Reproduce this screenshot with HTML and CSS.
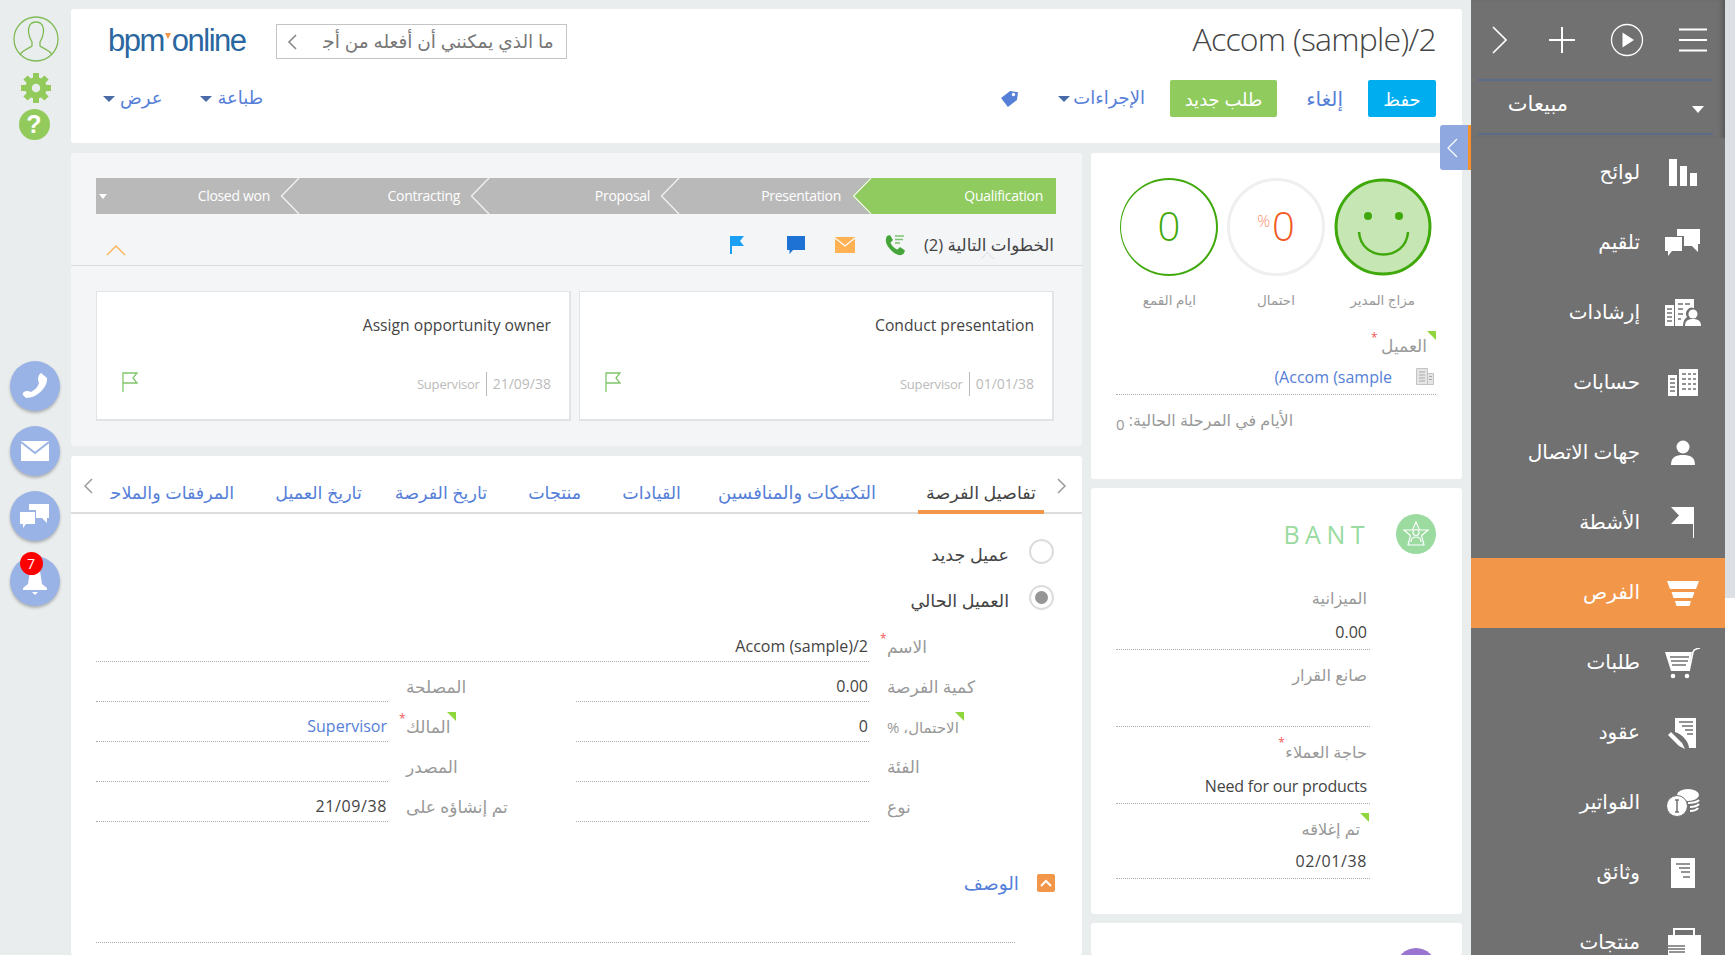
FILE: index.html
```html
<!DOCTYPE html>
<html lang="ar" dir="rtl">
<head>
<meta charset="utf-8">
<title>Accom (sample)/2</title>
<link rel="stylesheet" href="styles.css">
</head>
<body>
<div class="app">

<aside class="sidebar">
  <div class="side-top">
    <div class="side-tools">
      <svg class="ico-burger" width="28" height="24" viewBox="0 0 28 24"><path d="M0 1.500H28M0 12H28M0 22.500H28" stroke="#fff" stroke-width="2" fill="none"/></svg>
      <svg class="ico-play" width="34" height="34" viewBox="0 0 34 34"><circle cx="17" cy="17" r="15.500" fill="none" stroke="#fff" stroke-width="1.300"/><path d="M12.500 9.500 24 17 12.500 24.500Z" fill="#fff"/></svg>
      <svg class="ico-plus" width="26" height="26" viewBox="0 0 26 26"><path d="M13 0V26M0 13H26" stroke="#fff" stroke-width="2" fill="none"/></svg>
      <svg class="ico-next" width="15" height="28" viewBox="0 0 15 28"><path d="M1 1 14 14 1 27" stroke="#fff" stroke-width="1.600" fill="none"/></svg>
    </div>
    <div class="side-section"><span class="side-caret"></span><span>مبيعات</span></div>
  </div>
  <nav class="side-menu">
    <a class="side-item"><span class="side-ico"><svg width="30" height="28" viewBox="0 0 30 28"><path d="M1 0H9V27H1ZM12 7H19V27H12ZM22 14H29V27H22Z" fill="#fff"/></svg></span><span>لوائح</span></a>
    <a class="side-item"><span class="side-ico"><svg width="36" height="28" viewBox="0 0 36 28"><path d="M12 0H35V15H33V23L27 17H19V7H12Z" fill="#fff"/><path d="M0 8H17V22H7L3 27V22H0Z" fill="#fff"/></svg></span><span>تلقيم</span></a>
    <a class="side-item"><span class="side-ico"><svg width="36" height="28" viewBox="0 0 36 28"><path d="M0 6H9V27H0Z" fill="#fff"/><path d="M10 0H29V9A6 6 0 0 0 22 18 11 11 0 0 0 18 27H10Z" fill="#fff"/><circle cx="28" cy="15" r="4.500" fill="#fff"/><path d="M20 27C20 21 24 20 28 20S36 21 36 27Z" fill="#fff"/><path d="M2 10H7M2 14H7M2 18H7M2 22H7M13 5H18M20 5H25M13 10H18M13 15H18M13 20H16" stroke="#717171" stroke-width="1.500"/></svg></span><span>إرشادات</span></a>
    <a class="side-item"><span class="side-ico"><svg width="30" height="28" viewBox="0 0 30 28"><path d="M0 6H9V27H0ZM11 0H30V27H11Z" fill="#fff"/><path d="M2 10H7M2 14H7M2 18H7M2 22H7M14 5H18M20 5H23M25 5H28M14 10H18M20 10H23M25 10H28M14 15H18M20 15H23M25 15H28M14 20H18M20 20H23M25 20H28" stroke="#717171" stroke-width="1.500"/></svg></span><span>حسابات</span></a>
    <a class="side-item"><span class="side-ico"><svg width="24" height="26" viewBox="0 0 24 26"><circle cx="12" cy="7" r="6.500" fill="#fff"/><path d="M0 25C0 17 5 15 12 15S24 17 24 25Z" fill="#fff"/></svg></span><span>جهات الاتصال</span></a>
    <a class="side-item"><span class="side-ico"><svg width="24" height="32" viewBox="0 0 24 32"><path d="M0 0H23V31H22V17H0L8 8.500Z" fill="#fff"/></svg></span><span>الأشطة</span></a>
    <a class="side-item is-active"><span class="side-ico"><svg width="32" height="25" viewBox="0 0 32 25"><path d="M0 0H32L29 8H3ZM4.500 11H27.500L25.500 17H6.500ZM8 20H24L22.500 25H9.500Z" fill="#fff"/></svg></span><span>الفرص</span></a>
    <a class="side-item"><span class="side-ico"><svg width="36" height="31" viewBox="0 0 36 31"><path d="M0 4H27L24 23H6Z" fill="#fff"/><path d="M5 9H24M6 13H23M7 17H21" stroke="#717171" stroke-width="1.500"/><path d="M24 23 28 4Q29 1 35 0" stroke="#fff" stroke-width="1.600" fill="none"/><circle cx="8" cy="28" r="2.300" fill="#fff"/><circle cx="22" cy="28" r="2.300" fill="#fff"/></svg></span><span>طلبات</span></a>
    <a class="side-item"><span class="side-ico"><svg width="30" height="31" viewBox="0 0 30 31"><path d="M7 0H28V30H21C21 24 14 16 7 14Z" fill="#fff"/><path d="M11 4H25M14 8H25M17 12H25M19 16H25" stroke="#717171" stroke-width="1.400"/><path d="M0 17 3 14 14 25 17 31 11 28Z" fill="#fff"/></svg></span><span>عقود</span></a>
    <a class="side-item"><span class="side-ico"><svg width="33" height="28" viewBox="0 0 33 28"><ellipse cx="21" cy="6" rx="11" ry="6" fill="#fff"/><path d="M21 14Q29 14 32 11M23 18Q29 18 32 15M23 22Q29 22 31 19" stroke="#fff" stroke-width="2.200" fill="none"/><circle cx="10" cy="17" r="10.500" fill="#fff" stroke="#717171"/><path d="M10 11V23M8 11H12M8 23H12" stroke="#717171" stroke-width="1.500"/></svg></span><span>الفواتير</span></a>
    <a class="side-item"><span class="side-ico"><svg width="24" height="30" viewBox="0 0 24 30"><path d="M0 0H24V30H0Z" fill="#fff"/><path d="M5 6H19M8 10H19M10 14H19M12 19H19" stroke="#717171" stroke-width="1.400"/></svg></span><span>وثائق</span></a>
    <a class="side-item"><span class="side-ico"><svg width="36" height="30" viewBox="0 0 36 30"><path d="M9 7V1H29V7" stroke="#fff" stroke-width="2" fill="none"/><path d="M3 7H36V30H3Z" fill="#fff"/><path d="M0 18H20M2 21H20M4 24H20" stroke="#717171" stroke-width="1.400"/></svg></span><span>منتجات</span></a>
  </nav>
</aside>

<main class="workspace">
  <header class="card page-head">
    <div class="head-row">
      <h1 class="page-title" dir="ltr">Accom (sample)/2</h1>
      <div class="head-brand">
        <div class="search"><span class="search-text">ما الذي يمكنني أن أفعله من أج&zwj;</span><svg class="search-chev" width="10" height="16" viewBox="0 0 10 16"><path d="M9 1 2 8 9 15" stroke="#888" stroke-width="1.600" fill="none"/></svg></div>
        <div class="logo" dir="ltr">bpm<span class="logo-dot"></span>online</div>
      </div>
    </div>
    <div class="head-row head-actions">
      <div class="actions">
        <a class="btn btn-save">حفظ</a>
        <a class="link-cancel">إلغاء</a>
        <a class="btn btn-new">طلب جديد</a>
        <a class="menu-link menu-actions">الإجراءات<i class="caret"></i></a>
        <svg class="ico-tag" width="18" height="18" viewBox="0 0 18 18"><path d="M9 1H17V9L9 17 1 9Z" fill="#5680d8" transform="rotate(8 9 9)"/><circle cx="13.500" cy="4.500" r="1.700" fill="#fff"/></svg>
      </div>
      <div class="view-menus">
        <a class="menu-link">طباعة<i class="caret"></i></a>
        <a class="menu-link">عرض<i class="caret"></i></a>
      </div>
    </div>
  </header>

  <div class="columns">
    <div class="col-main">
      <section class="card stage-card">
        <div class="stages" dir="ltr">
          <div class="stage stage-last"><i class="stage-drop"></i><span>Closed won</span></div>
          <div class="stage"><svg class="stage-chev" width="20" height="36" viewBox="0 0 20 36"><path d="M19 0 1.500 18 19 36" stroke="#f0f0f0" stroke-width="1.400" fill="none"/></svg><span>Contracting</span></div>
          <div class="stage"><svg class="stage-chev" width="20" height="36" viewBox="0 0 20 36"><path d="M19 0 1.500 18 19 36" stroke="#f0f0f0" stroke-width="1.400" fill="none"/></svg><span>Proposal</span></div>
          <div class="stage stage-present"><svg class="stage-chev" width="20" height="36" viewBox="0 0 20 36"><path d="M19 0 1.500 18 19 36" stroke="#f0f0f0" stroke-width="1.400" fill="none"/></svg><span>Presentation</span></div>
          <div class="stage stage-current"><svg class="stage-chev" width="20" height="36" viewBox="0 0 20 36"><path d="M19 0 1.500 18 19 36" stroke="#f0f0f0" stroke-width="1.400" fill="none"/></svg><span>Qualification</span></div>
        </div>
        <div class="steps-bar">
          <span class="steps-title">الخطوات التالية (2)</span>
          <svg class="ico-phone" width="21" height="21" viewBox="0 0 21 21"><path d="M3 1 6 0 9 5 6.500 7.500C7 10 11 14 13.500 14.500L16 12 21 15.500 20 18C18 21 14 21 9 17 3 12 0 6 3 1Z" fill="#46a53a"/><path d="M11 1H20M11 4.500H19M11 8H16" stroke="#7cc36f" stroke-width="1.500"/></svg>
          <svg class="ico-env" width="20" height="16" viewBox="0 0 20 16"><path d="M0 0H20V16H0Z" fill="#ffb153"/><path d="M0 1 10 9 20 1" stroke="#fff" stroke-width="1.300" fill="none"/></svg>
          <svg class="ico-msg" width="18" height="18" viewBox="0 0 18 18"><path d="M0 0H18V14H6L2.500 18V14H0Z" fill="#1d72d3"/></svg>
          <svg class="ico-flag" width="14" height="18" viewBox="0 0 14 18"><path d="M0 0H14L10 5 14 10H2V18H0Z" fill="#1a9ff5"/></svg>
          <svg class="ico-collapse" width="20" height="11" viewBox="0 0 20 11"><path d="M1 10 10 1 19 10" stroke="#ffb153" stroke-width="1.400" fill="none"/></svg>
        </div>
        <div class="tasks">
          <article class="task">
            <div class="task-title">Conduct presentation</div>
            <div class="task-foot">
              <span class="task-date" dir="ltr">01/01/38</span><span class="task-owner">Supervisor</span>
              <svg class="task-flag" width="16" height="20" viewBox="0 0 16 20"><path d="M1 20V1H15L11 6 15 11H1" stroke="#80c66c" stroke-width="1.300" fill="none"/></svg>
            </div>
          </article>
          <article class="task">
            <div class="task-title">Assign opportunity owner</div>
            <div class="task-foot">
              <span class="task-date" dir="ltr">21/09/38</span><span class="task-owner">Supervisor</span>
              <svg class="task-flag" width="16" height="20" viewBox="0 0 16 20"><path d="M1 20V1H15L11 6 15 11H1" stroke="#80c66c" stroke-width="1.300" fill="none"/></svg>
            </div>
          </article>
        </div>
      </section>

      <section class="card detail-card">
        <div class="tabs">
          <svg class="tab-arrow" width="9" height="16" viewBox="0 0 9 16"><path d="M1 1 8 8 1 15" stroke="#999" stroke-width="1.500" fill="none"/></svg>
          <a class="tab is-active">تفاصيل الفرصة</a>
          <a class="tab tab-tactics">التكتيكات والمنافسين</a>
          <a class="tab">القيادات</a>
          <a class="tab">منتجات</a>
          <a class="tab tab-history">تاريخ الفرصة</a>
          <a class="tab">تاريخ العميل</a>
          <a class="tab tab-end">المرفقات والملاح&zwj;</a>
          <svg class="tab-arrow tab-arrow-end" width="9" height="16" viewBox="0 0 9 16"><path d="M8 1 1 8 8 15" stroke="#999" stroke-width="1.500" fill="none"/></svg>
        </div>
        <div class="radios">
          <label class="radio"><i class="radio-dot"></i><span>عميل جديد</span></label>
          <label class="radio"><i class="radio-dot is-on"></i><span>العميل الحالي</span></label>
        </div>
        <div class="form-grid">
          <div class="f-label"><span class="req-start">الاسم</span></div>
          <div class="f-value f-wide"><bdi dir="ltr">Accom (sample)/2</bdi></div>

          <div class="f-label"><span>كمية الفرصة</span></div>
          <div class="f-value">0.00</div>
          <div class="f-label"><span>المصلحة</span></div>
          <div class="f-value"></div>

          <div class="f-label f-narrow"><span class="mark">الاحتمال، %</span></div>
          <div class="f-value">0</div>
          <div class="f-label"><span class="mark req-owner">المالك</span></div>
          <div class="f-value f-link">Supervisor</div>

          <div class="f-label"><span>الفئة</span></div>
          <div class="f-value"></div>
          <div class="f-label"><span>المصدر</span></div>
          <div class="f-value"></div>

          <div class="f-label"><span>نوع</span></div>
          <div class="f-value"></div>
          <div class="f-label"><span>تم إنشاؤه على</span></div>
          <div class="f-value f-date"><bdi dir="ltr">21/09/38</bdi></div>
        </div>
        <div class="desc-head">
          <i class="desc-toggle"><svg width="12" height="8" viewBox="0 0 12 8"><path d="M1 7 6 2 11 7" stroke="#fff" stroke-width="2" fill="none"/></svg></i>
          <span>الوصف</span>
        </div>
        <div class="desc-line"></div>
      </section>
    </div>

    <div class="col-side">
      <section class="card kpi-card">
        <div class="kpis">
          <div class="kpi">
            <svg width="98" height="98" viewBox="0 0 98 98"><circle cx="49" cy="49" r="47" fill="#c6e6b4" stroke="#3fa80a" stroke-width="3"/><circle cx="34" cy="38" r="4" fill="#3fa80a"/><circle cx="65" cy="38" r="4" fill="#3fa80a"/><path d="M25 54C27 84 72 84 74 54" stroke="#3fa80a" stroke-width="2.500" fill="none"/></svg>
            <span class="kpi-label">مزاج المدير</span>
          </div>
          <div class="kpi">
            <div class="dial dial-prob"><span class="dial-num" dir="ltr"><small>%</small>0</span></div>
            <span class="kpi-label">احتمال</span>
          </div>
          <div class="kpi">
            <div class="dial dial-days"><span class="dial-num">0</span></div>
            <span class="kpi-label">ايام القمع</span>
          </div>
        </div>
        <div class="client-label"><span class="mark req-client">العميل</span></div>
        <div class="client-value">
          <svg width="18" height="17" viewBox="0 0 18 17"><path d="M0.500 0.500H11.500V16.500H0.500ZM11.500 5.500H17.500V16.500H11.500Z" fill="#e4e4e4" stroke="#c4c4c4"/><path d="M3 4H9M3 7H9M3 10H9M3 13H9M13 8.500H16M13 11.500H16" stroke="#aaa"/></svg>
          <a dir="ltr">(Accom (sample</a>
        </div>
        <div class="days-line">الأيام في المرحلة الحالية: <b>0</b></div>
      </section>

      <section class="card bant-card">
        <div class="bant-head">
          <div class="bant-badge"><svg width="28" height="28" viewBox="0 0 28 28"><path d="M14 2 17.500 10H26L19.500 15.500 22 25H6L8.500 15.500 2 10H10.500Z" fill="none" stroke="#fff" stroke-width="1.200"/><circle cx="14" cy="12.500" r="3" fill="none" stroke="#fff" stroke-width="1.200"/><path d="M9 22C9 18 11 17 14 17S19 18 19 22" fill="none" stroke="#fff" stroke-width="1.200"/></svg></div>
          <span class="bant-title" dir="ltr">BANT</span>
        </div>
        <div class="b-field"><div class="b-label">الميزانية</div><div class="b-value">0.00</div></div>
        <div class="b-field"><div class="b-label">صانع القرار</div><div class="b-value"></div></div>
        <div class="b-field"><div class="b-label"><span class="req-need">حاجة العملاء</span></div><div class="b-value b-need"><bdi dir="ltr">Need for our products</bdi></div></div>
        <div class="b-field b-last"><div class="b-label"><span class="mark">تم إغلاقه</span></div><div class="b-value f-date"><bdi dir="ltr">02/01/38</bdi></div></div>
      </section>

      <section class="card next-card">
        <div class="next-badge"></div>
        <span class="next-title">تفاصيل</span>
      </section>
    </div>
  </div>
</main>

<div class="rail">
  <svg class="rail-avatar" width="46" height="46" viewBox="0 0 46 46"><circle cx="23" cy="23" r="22" fill="none" stroke="#7fbb55" stroke-width="1.300"/><path d="M23 6C17 6 15 11 15.500 16 16 20 17 23 19 26V30C15 33 9 34 7 39M23 6C29 6 31 11 30.500 16 30 20 29 23 27 26V30C31 33 37 34 39 39" fill="none" stroke="#7fbb55" stroke-width="1.300"/></svg>
  <svg class="rail-gear" width="32" height="32" viewBox="0 0 32 32"><circle cx="16" cy="16" r="7.500" fill="none" stroke="#92ca5b" stroke-width="6.500"/><path d="M16 1V7M16 25V31M1 16H7M25 16H31M5.500 5.500 9.700 9.700M22.300 22.300 26.500 26.500M5.500 26.500 9.700 22.300M22.300 9.700 26.500 5.500" stroke="#92ca5b" stroke-width="6"/></svg>
  <div class="rail-help" dir="ltr">?</div>
  <div class="rail-circles">
    <div class="rail-btn"><svg width="28" height="28" viewBox="0 0 28 28"><path d="M20 1 26 6C27 15 16 26 5 26L2 23C1 21 3 19 7 19L10 20C14 18 17 15 18 11L17 8C17 5 18 2 20 1Z" fill="#fff"/></svg></div>
    <div class="rail-btn"><svg width="28" height="20" viewBox="0 0 28 20"><path d="M0 0H28V20H0Z" fill="#fff"/><path d="M0 1 14 12 28 1" stroke="#9ab3e6" stroke-width="2" fill="none"/></svg></div>
    <div class="rail-btn"><svg width="30" height="25" viewBox="0 0 30 25"><path d="M9 0H29V14H27V19L22 14H16V6H9Z" fill="#fff"/><path d="M0 8H15V20H6L3 24V20H0Z" fill="#fff"/></svg></div>
    <div class="rail-btn rail-bell"><svg width="24" height="28" viewBox="0 0 24 28"><path d="M7 4H17L19 17 24 21V23H0V21L5 17Z" fill="#fff"/><path d="M9 25H15L12 28Z" fill="#fff"/></svg><span class="badge">7</span></div>
  </div>
</div>

<button class="collapse" type="button" aria-label="collapse"><svg width="11" height="20" viewBox="0 0 11 20"><path d="M10 1 1 10 10 19" stroke="#fff" stroke-width="1.200" fill="none"/></svg></button>
</div>
</body>
</html>
```
FILE: styles.css
```css
* { box-sizing: border-box; }
html, body { margin: 0; height: 955px; overflow: hidden; }
body { font-family: "Open Sans", "DejaVu Sans", sans-serif; font-size: 15px; color: #444; background: #e9edee; }
a { text-decoration: none; cursor: pointer; }
i { display: block; font-style: normal; }
svg { display: block; flex: none; }

.app { display: flex; height: 955px; width: 1735px; padding-right: 10px; overflow: hidden; position: relative;
  background: linear-gradient(#dcdfe4, #dcdfe4) no-repeat right top / 10px 598px, linear-gradient(#fff, #fff) no-repeat right top / 10px 100%; background-color: #e9edee; }

/* right application menu */
.sidebar { width: 254px; flex: none; background: #717171; color: #fff; }
.side-top { height: 138px; padding: 0 12px 3px 7px; box-shadow: inset -5px 0 4px -2px #5a5a5a; }
.side-tools { height: 79px; display: flex; align-items: center; padding-right: 6px; }
.ico-play { margin-right: 35px; }
.ico-plus { margin-right: 35px; }
.ico-next { margin-right: 42px; }
.side-section { height: 56px; display: flex; align-items: center; border-top: 2px solid #5c6b88; border-bottom: 2px solid #5c6b88; font-size: 21px; line-height: 40px; padding-right: 9px; }
.side-section span:last-child { margin-top: -8px; }
.side-caret { width: 0; height: 0; border-left: 6.500px solid transparent; border-right: 6.500px solid transparent; border-top: 7px solid #fff; margin-left: 124px; margin-top: 4px; }
.side-item { height: 70px; display: flex; align-items: center; gap: 23px; padding-right: 22px; color: #fff; font-size: 20px; line-height: 30px; }
.side-item span:last-child { margin-top: -3px; }
.side-item.is-active { background: #f29649; }
.side-ico { width: 40px; height: 40px; display: flex; align-items: center; justify-content: center; flex: none; }

/* main area */
.workspace { width: 1391px; flex: none; margin-right: 9px; padding-top: 9px; display: flex; flex-direction: column; gap: 10px; }
.card { background: #fff; border-radius: 3px; }

.page-head { height: 134px; padding: 15px 26px 0 32px; flex: none; }
.head-row { display: flex; justify-content: space-between; align-items: center; }
.page-title { margin: -6px 0 0 0; font-size: 32px; letter-spacing: -0.750px; font-weight: 300; line-height: 35px; color: #444; }
.head-brand { display: flex; align-items: center; gap: 30px; padding-left: 5px; }
.search { width: 291px; height: 35px; border: 1.500px solid #c4c4c4; display: flex; align-items: center; padding: 0 12px 0 10px; justify-content: space-between; }
.search-text { font-size: 18.500px; color: #777; white-space: nowrap; line-height: 30px; margin-top: -2px; }
.logo { font-family: "Liberation Sans", sans-serif; font-size: 31px; line-height: 35px; letter-spacing: -1.500px; color: #2a669f; margin-top: -2px; }
.logo-dot { display: inline-block; width: 0; height: 0; border-left: 3px solid transparent; border-right: 3px solid transparent; border-top: 6px solid #f29649; vertical-align: 12px; margin: 0 1px; }
.head-actions { margin-top: 21px; height: 37px; }
.actions { display: flex; align-items: center; height: 37px; }
.btn { display: flex; align-items: center; justify-content: center; height: 37px; border-radius: 2px; color: #fff; font-size: 18px; }
.btn-save { width: 68px; background: #00aeef; margin-left: 25px; }
.link-cancel { width: 35px; color: #5680d8; font-size: 20px; margin-left: 31px; white-space: nowrap; }
.btn-new { width: 107px; background: #8fcb5d; margin-left: 25px; }
.menu-link { display: flex; align-items: center; gap: 5px; padding-bottom: 3px; color: #5680d8; font-size: 18px; white-space: nowrap; line-height: 30px; }
.menu-actions { margin-left: 40px; gap: 3px; }
.caret { width: 0; height: 0; border-left: 6px solid transparent; border-right: 6px solid transparent; border-top: 6px solid #4a6aa8; margin-top: 4px; }
.view-menus { display: flex; gap: 38px; }

.columns { display: flex; gap: 9px; flex: 1; min-height: 0; }
.col-main { order: 2; width: 1011px; flex: none; display: flex; flex-direction: column; gap: 10px; }
.col-side { order: 1; width: 371px; flex: none; display: flex; flex-direction: column; gap: 9px; }

/* stage card */
.stage-card { background: #f3f5f7; height: 293px; flex: none; padding-top: 25px; }
.stages { display: flex; height: 36px; margin: 0 26px 0 25px; background: #b9b9b9; direction: ltr; }
.stage { position: relative; width: 190px; height: 36px; color: #fff; font-size: 14px; letter-spacing: -0.300px; display: flex; align-items: center; justify-content: flex-end; padding: 0 10px 2px 0; }
.stage-last { width: 184px; }
.stage-present { width: 192px; padding-right: 11px; }
.stage-current { width: 204px; background: #8fcb5f; clip-path: polygon(18px 0, 100% 0, 100% 100%, 18px 100%, 0 50%); padding-right: 13px; }
.stage-chev { position: absolute; left: 0; top: 0; }
.stage-drop { position: absolute; left: 3px; top: 16px; border-left: 4.500px solid transparent; border-right: 4.500px solid transparent; border-top: 5px solid #fff; }
.steps-bar { position: relative; height: 52px; display: flex; align-items: center; padding: 11px 28px 0 35px; border-bottom: 1px solid #d9dcdf; font-size: 16.700px; line-height: 24px; }
.steps-bar::after { content: ""; position: absolute; right: 88px; bottom: -1px; width: 12px; height: 12px; border-top: 1px solid #d9dcdf; border-left: 1px solid #d9dcdf; transform: translateY(-1px) rotate(45deg) scale(.7); background: #f3f5f7; }
.steps-title { color: #444; margin-left: 19px; white-space: nowrap; }
.ico-phone { margin-left: 29px; }
.ico-env { margin-left: 30px; }
.ico-msg { margin-left: 43px; }
.ico-collapse { margin-right: auto; margin-top: 10px; }
.tasks { display: flex; gap: 8px; padding: 25px 28px 0 25px; }
.task { flex: 1; height: 130px; background: #fff; border: 1px solid #e1e3e5; border-width: 1px 2px 2px 1px; padding: 23px 18px 0 22px; }
.task-title { font-size: 15.700px; line-height: 20px; color: #444; height: 57px; font-weight: 400; }
.task-foot { display: flex; align-items: center; height: 24px; font-size: 13px; color: #bbb; }
.task-date { font-size: 14px; padding-left: 6px; border-left: 1px solid #bbb; line-height: 24px; }
.task-owner { padding-right: 6px; letter-spacing: -0.200px; }
.task-flag { margin-right: auto; margin-top: -4px; margin-left: 3px; }

/* details */
.detail-card { flex: 1; min-height: 0; overflow: hidden; }
.tabs { height: 58px; border-bottom: 2px solid #ddd; display: flex; align-items: flex-end; padding-right: 16px; position: relative; }
.tab-arrow { align-self: center; margin-top: 3px; margin-left: 13px; }
.tab-arrow-end { position: absolute; left: 13px; top: 22px; margin: 0; }
.tab { height: 58px; margin-bottom: -2px; padding: 18px 8px 0; color: #5680d8; font-size: 17.500px; display: flex; align-items: center; border-bottom: 4px solid transparent; margin-left: 25px; white-space: nowrap; }
.tab.is-active { color: #444; border-bottom-color: #f29649; margin-left: 34px; }
.tab-tactics { font-size: 18px; margin-left: 21px; }
.tab-history { margin-left: 17px; }
.tab-end { margin-left: 0; }
.radios { padding: 14px 28px 0 0; }
.radio { height: 46px; display: flex; align-items: center; gap: 20px; font-size: 17.500px; line-height: 24px; color: #444; }
.radio span { padding-top: 6px; }
.radio-dot { width: 25px; height: 25px; border-radius: 50%; border: 2px solid #dcdcdc; background: #fff; position: relative; flex: none; }
.radio-dot.is-on::after { content: ""; position: absolute; inset: 4px; border-radius: 50%; background: #969696; }
.form-grid { display: grid; grid-template-columns: 166px 293px 152px 292px; grid-auto-rows: 40px; column-gap: 18px; margin: 2px 29px 0 25px; }
.f-label { display: flex; justify-content: flex-end; align-items: flex-end; padding-bottom: 5px; font-size: 17px; color: #999; line-height: 20px; }
.f-label span { position: relative; }
.f-narrow { font-size: 15px; }
.f-narrow .mark::before { right: -5px; }
.f-value { display: flex; align-items: flex-end; padding: 0 1px 5px 0; border-bottom: 1px dotted #aaa; font-size: 16px; line-height: 20px; color: #444; }
.f-wide { grid-column: span 3; }
.f-link { color: #5680d8; }
.f-date { letter-spacing: .6px; }
.mark::before { content: ""; position: absolute; right: -9px; top: -5px; border-top: 9px solid #8fd63e; border-left: 9px solid transparent; }
.req-owner::before { right: -6px; }
.req-start::after, .req-owner::after, .req-client::after, .req-need::after { content: "*"; position: absolute; left: -7px; top: -4px; color: #f05a5a; font-size: 12px; line-height: 12px; }
.req-client::after { left: -10px; }
.desc-head { display: flex; align-items: center; gap: 18px; margin-top: 51px; padding-right: 27px; font-size: 18.500px; color: #5680d8; line-height: 20px; }
.desc-toggle { width: 18px; height: 18px; background: #f29649; border-radius: 2px; display: flex; align-items: center; justify-content: center; }
.desc-line { height: 1px; margin: 49px 67px 0 25px; border-bottom: 1px dotted #aaa; }

/* right column */
.kpi-card { height: 326px; flex: none; padding: 25px 26px 0 25px; }
.kpis { display: flex; }
.kpi { width: 107px; display: flex; flex-direction: column; align-items: center; gap: 15px; }
.kpi-label { font-size: 13.500px; line-height: 18px; color: #999; }
.dial { width: 98px; height: 98px; border-radius: 50%; display: flex; align-items: center; justify-content: center; font-weight: 300; font-size: 40px; padding-bottom: 2px; }
.dial-prob { border: 3px solid #efefef; color: #f15a24; }
.dial-prob small { font-size: 16px; vertical-align: 14px; margin-right: 2px; color: #f7916c; }
.dial-days { border: 2px solid #3fa80a; border-left-width: 1.500px; color: #3fa80a; }
.dial-num { line-height: 1; }
.client-label { margin-top: 27px; padding-right: 9px; font-size: 17px; color: #999; line-height: 20px; }
.client-label span { position: relative; display: inline-block; }
.client-value { display: flex; align-items: center; gap: 24px; height: 31px; margin-top: 5px; padding-right: 2px; }
.client-value a { color: #5680d8; font-size: 16px; }
.days-line { border-top: 1px dotted #aaa; margin-top: 2px; padding-top: 14px; text-align: left; font-size: 16px; color: #999; }
.days-line b { font-weight: 400; font-size: 15px; position: relative; top: 4px; }
.bant-card { height: 426px; flex: none; padding: 26px 92px 0 25px; }
.bant-head { display: flex; align-items: center; gap: 26px; height: 40px; margin: 0 -66px 19px 0; }
.bant-badge { width: 40px; height: 40px; border-radius: 50%; background: #9bdba0; display: flex; align-items: center; justify-content: center; }
.bant-title { font-size: 25px; font-weight: 400; letter-spacing: 5.500px; color: #9adba0; }
.b-field { height: 77px; border-bottom: 1px dotted #aaa; padding: 14px 3px 0 0; }
.b-last { height: 75px; }
.b-label { font-size: 16.200px; line-height: 22px; color: #999; height: 35px; }
.b-last .b-label { height: 33px; }
.b-label span { position: relative; display: inline-block; }
.b-label .mark { margin-right: 7px; }
.b-value { font-size: 16px; line-height: 20px; color: #444; }
.b-need { letter-spacing: -0.200px; }
.next-card { flex: 1; min-height: 0; padding: 25px 26px 0 0; display: flex; gap: 24px; overflow: hidden; }
.next-badge { width: 40px; height: 40px; border-radius: 50%; background: #9a75d0; }
.next-title { font-size: 15px; color: #999; margin-top: 4px; }

/* left rail */
.rail { width: 71px; flex: none; display: flex; flex-direction: column; align-items: center; padding: 16px 0 0; }
.rail-gear { margin-top: 10px; }
.rail-help { width: 31px; height: 31px; margin: 5px 3px 0 0; border-radius: 50%; background: #92ca5b; color: #fff; font: 700 25px/31px "Liberation Sans", sans-serif; text-align: center; }
.rail-circles { margin: 221px 2px 0 0; display: flex; flex-direction: column; gap: 15px; }
.rail-btn { width: 50px; height: 50px; border-radius: 50%; background: #9ab3e6; box-shadow: 0 2px 3px rgba(0,0,0,.25); display: flex; align-items: center; justify-content: center; position: relative; }
.badge { position: absolute; left: 10px; top: -4px; width: 23px; height: 23px; border-radius: 50%; background: #f00; color: #fff; font-size: 14px; line-height: 23px; text-align: center; }

.collapse { position: absolute; left: 1440px; top: 125px; width: 31px; height: 45px; padding: 0 3px 0 0; border: 0; border-right: 3px solid #f7912e; border-radius: 3px 0 0 3px; background: #8fa9e0; display: flex; align-items: center; justify-content: center; }
```
